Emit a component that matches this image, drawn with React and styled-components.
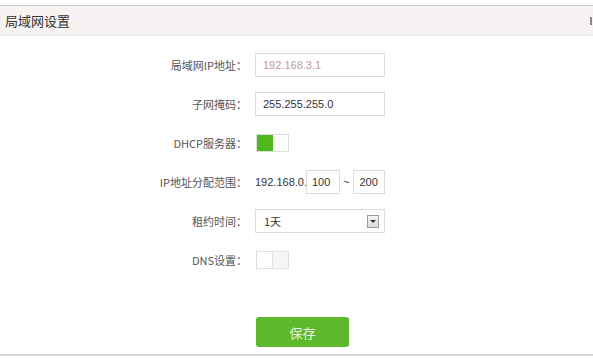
import React from "react";
import styled, { createGlobalStyle } from "styled-components";

const Global = createGlobalStyle`
  html, body {
    margin: 0;
    padding: 0;
    background: #fff;
  }
  body {
    font-family: "Noto Sans CJK SC", "Liberation Sans", sans-serif;
    color: #555;
  }
`;

const Panel = styled.div`
  width: 593px;
  height: 358px;
  box-sizing: border-box;
  padding-top: 5px;
  display: flex;
  flex-direction: column;
  background: #fff;
`;

const Header = styled.div`
  height: 29px;
  border-top: 1px solid #cdc4c2;
  border-bottom: 1px solid #efebeb;
  background: #f7f3f3;
  display: flex;
  align-items: center;
  padding-left: 5px;
  font-size: 13px;
  color: #333;
  overflow: hidden;
`;

const Close = styled.span`
  margin-left: auto;
  width: 2px;
  height: 8px;
  background: #888;
  margin-right: 1px;
`;

const Form = styled.div`
  display: grid;
  grid-template-columns: 247px auto;
  column-gap: 8px;
  row-gap: 15px;
  padding-top: 17px;
  align-items: center;
`;

const Label = styled.div`
  text-align: right;
  font-size: 11px;
  color: #555;
  height: 24px;
  line-height: 24px;
`;

const Field = styled.div`
  display: flex;
  align-items: center;
  height: 24px;
  font-family: "Liberation Sans", "Noto Sans CJK SC", sans-serif;
  font-size: 11px;
  color: #333;
`;

const Input = styled.div`
  box-sizing: border-box;
  width: ${(p) => p.$w || 130}px;
  height: 24px;
  border: 1px solid #dcdcdc;
  padding-left: ${(p) => (p.$w ? 5 : 7)}px;
  line-height: 22px;
  color: ${(p) => p.$tint || "#333"};
`;

const Toggle = styled.div`
  box-sizing: border-box;
  width: 33px;
  height: 18px;
  border: 1px solid #dedede;
  display: flex;
  margin-left: 1px;
`;

const Half = styled.div`
  flex: 1;
  background: ${(p) => p.$color};
  border-right: ${(p) => (p.$divider ? "1px solid #e4e4e4" : "none")};
`;

const Plain = styled.span`
  margin-right: -1px;
`;

const Tilde = styled.span`
  margin: 0 4px 0 3px;
`;

const Select = styled.div`
  box-sizing: border-box;
  width: 130px;
  height: 24px;
  border: 1px solid #dcdcdc;
  display: flex;
  align-items: center;
  padding: 0 5px 0 8px;
  font-family: "Noto Sans CJK SC", sans-serif;
  color: #333;
`;

const Arrow = styled.div`
  margin-left: auto;
  width: 12px;
  height: 13px;
  box-sizing: border-box;
  border: 1px solid #9a9a9a;
  background: linear-gradient(#f4f4f4, #dcdcdc);
  display: flex;
  align-items: center;
  justify-content: center;
  &::after {
    content: "";
    border-left: 3px solid transparent;
    border-right: 3px solid transparent;
    border-top: 3px solid #333;
  }
`;

const Footer = styled.div`
  margin-top: 45px;
  padding-left: 256px;
  height: 30px;
`;

const Button = styled.div`
  width: 93px;
  height: 30px;
  border-radius: 3px;
  background: #5db92b;
  color: #e9f6e2;
  font-size: 13px;
  display: flex;
  align-items: center;
  justify-content: center;
`;

const BottomRule = styled.div`
  margin-top: 7px;
  border-top: 2px solid #ddd5d5;
`;

export default function App() {
  return (
    <Panel>
      <Global />
      <Header>
        局域网设置
        <Close />
      </Header>
      <Form>
        <Label>局域网IP地址：</Label>
        <Field>
          <Input $tint="#c49a9a">192.168.3.1</Input>
        </Field>

        <Label>子网掩码：</Label>
        <Field>
          <Input>255.255.255.0</Input>
        </Field>

        <Label>DHCP服务器：</Label>
        <Field>
          <Toggle>
            <Half $color="#4fb81d" />
            <Half $color="#fff" />
          </Toggle>
        </Field>

        <Label>IP地址分配范围：</Label>
        <Field>
          <Plain>192.168.0.</Plain>
          <Input $w={34}>100</Input>
          <Tilde>~</Tilde>
          <Input $w={32}>200</Input>
        </Field>

        <Label>租约时间：</Label>
        <Field>
          <Select>
            1天
            <Arrow />
          </Select>
        </Field>

        <Label>DNS设置：</Label>
        <Field>
          <Toggle>
            <Half $color="#fff" $divider />
            <Half $color="#f6f6f6" />
          </Toggle>
        </Field>
      </Form>
      <Footer>
        <Button>保存</Button>
      </Footer>
      <BottomRule />
    </Panel>
  );
}
